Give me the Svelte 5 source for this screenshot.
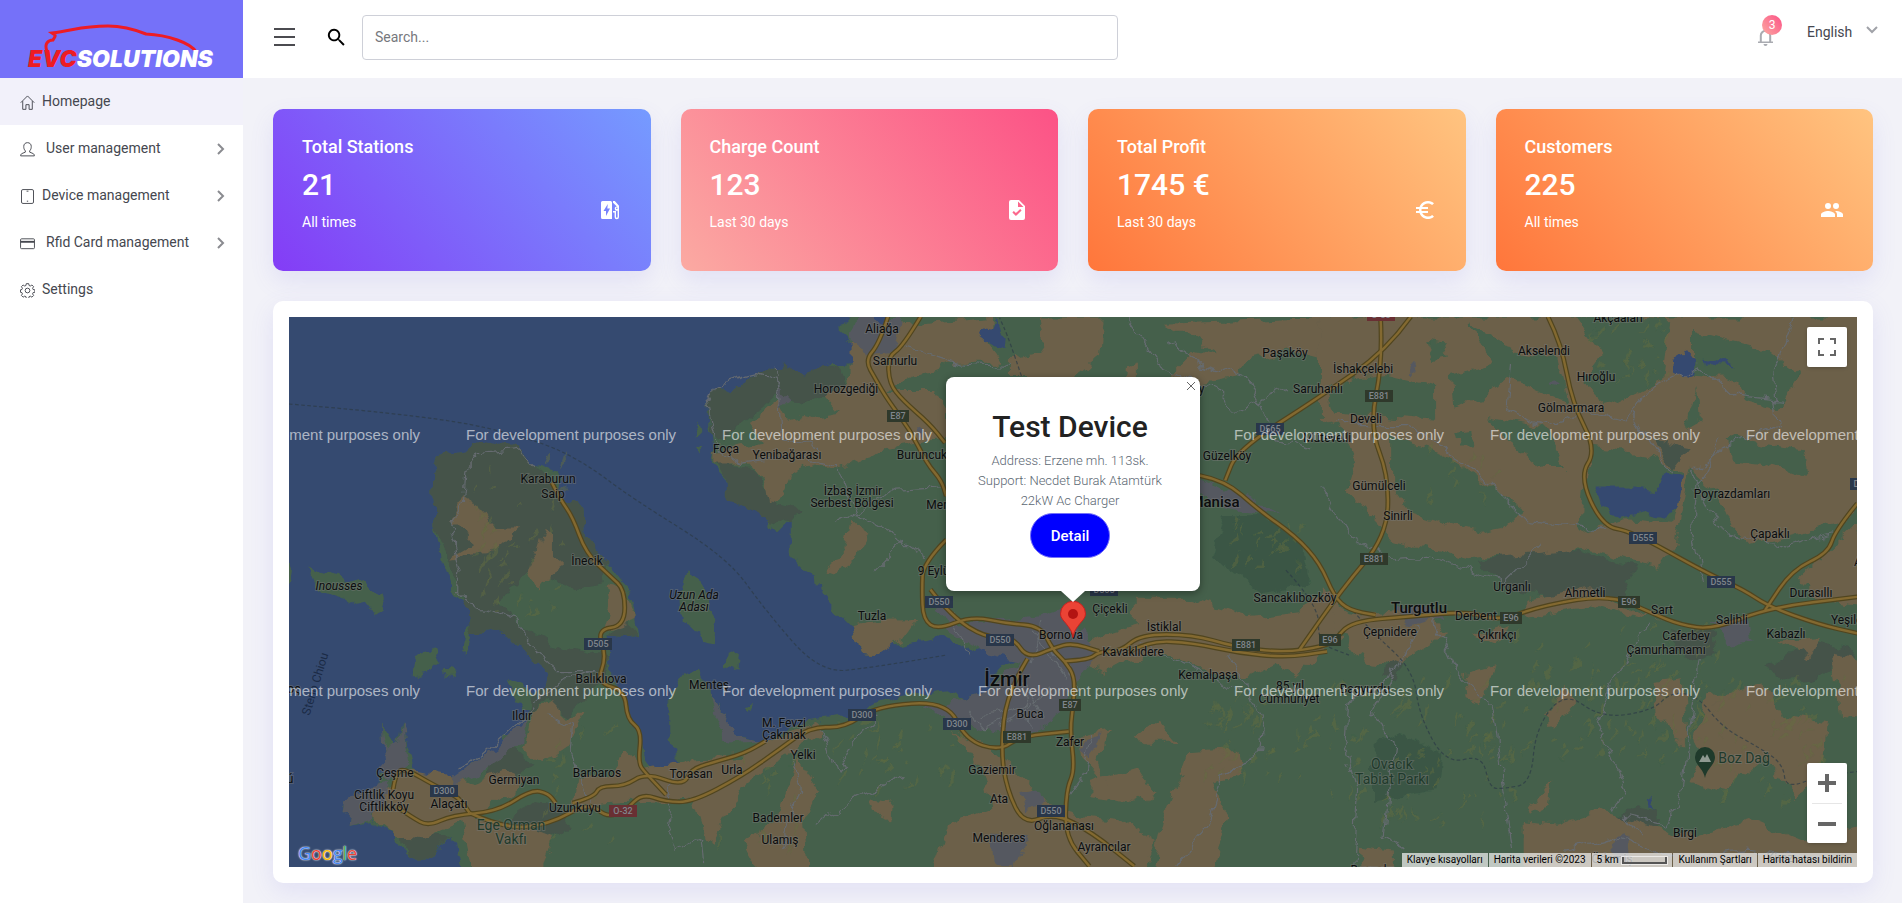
<script lang="ts">
  interface MenuItem {
    icon: string;
    label: string;
    active?: boolean;
    children?: boolean;
    wide?: boolean;
  }

  interface Stat {
    title: string;
    value: string;
    note: string;
    icon: string;
    tone: string;
  }

  const menu: MenuItem[] = [
    { icon: 'home', label: 'Homepage', active: true },
    { icon: 'user', label: 'User management', children: true, wide: true },
    { icon: 'device', label: 'Device management', children: true },
    { icon: 'card', label: 'Rfid Card management', children: true, wide: true },
    { icon: 'gear', label: 'Settings' }
  ];

  const stats: Stat[] = [
    { title: 'Total Stations', value: '21', note: 'All times', icon: 'station', tone: 'violet' },
    { title: 'Charge Count', value: '123', note: 'Last 30 days', icon: 'file', tone: 'pink' },
    { title: 'Total Profit', value: '1745 €', note: 'Last 30 days', icon: 'euro', tone: 'orange' },
    { title: 'Customers', value: '225', note: 'All times', icon: 'people', tone: 'orange' }
  ];

  // terrain, one polygon per entry
  const mainland =
    'M1540 255 705 255 699 262 690 272 705 286 707 299 694 300 684 300 680 320 659 308 640 301 622 310 603 321 590 317 583 332 584 352 588 371 586 382 600 396 600 412 620 415 634 428 644 438 651 431 651 456 665 472 673 475 676 489 689 503 702 516 708 540 724 541 736 532 770 525 787 530 807 538 818 532 835 530 842 541 830 545 818 558 812 569 795 577 781 569 742 574 716 584 699 591 659 596 631 610 605 604 597 591 586 571 577 552 560 560 550 580 550 602 557 626 566 637 554 648 543 640 532 624 527 602 515 577 503 563 503 541 500 523 527 525 523 503 517 483 498 461 482 442 481 420 464 409 458 390 441 384 429 368 410 371 395 362 384 373 361 376 357 390 358 431 364 461 373 486 381 492 390 505 384 522 380 538 385 541 390 522 412 519 432 537 452 555 444 569 435 580 434 593 415 615 390 629 375 643 356 643 339 632 330 596 327 615 315 597 316 618 324 634 313 640 313 651 287 659 285 679 305 676 327 690 336 706 356 706 373 690 381 720 1540 720Z';

  const islands = [
    'M254 467 270 472 286 480 300 476 312 490 318 504 310 510 300 496 288 500 276 492 262 486Z',
    'M342 542 356 536 361 548 352 556 341 558Z',
    'M366 551 375 553 376 558 368 556Z',
    'M566 470 576 478 582 496 592 512 590 532 580 530 574 518 562 514 561 492Z',
    'M600 536 609 540 608 552 599 548Z',
    'M416 557 432 563 444 580 430 584 422 570Z',
    'M572 350 580 356 576 360Z M574 366 582 368 578 372Z M416 603 424 607 418 612Z M614 582 620 578 617 588Z',
    'M236 458 240 470 238 482 234 480Z'
  ];

  const highland = [
    'M361 376 384 373 395 362 429 368 441 384 464 409 481 420 482 442 498 461 500 480 470 484 440 470 424 486 410 494 424 514 452 530 490 540 503 541 500 556 470 590 452 576 434 593 436 580 452 555 412 519 390 522 381 492 358 431 357 390Z',
    'M583 332 590 317 603 321 622 310 640 301 662 308 690 300 698 318 660 334 640 326 612 350 596 362 586 360Z',
    'M590 380 620 386 640 416 660 420 650 432 634 428 600 412 600 396Z',
    'M418 676 440 660 462 664 470 682 452 690 430 690Z',
    'M330 686 372 690 356 706 336 706Z',
    'M398 645 405 620 425 618 440 630 420 645Z',
    'M500 523 527 525 515 512 503 520Z',
    'M1220 464 1253 452 1290 452 1348 467 1339 490 1300 494 1241 486Z',
    'M1363 362 1394 368 1379 387 1366 380Z',
    'M1302 300 1316 322 1340 340 1362 364 1340 370 1316 340Z',
    'M1152 264 1170 262 1166 284 1155 282Z',
    'M1188 264 1212 262 1208 292 1198 288Z',
    'M1340 264 1306 262 1300 290 1290 270Z',
    'M1100 290 1112 286 1116 310 1100 306Z',
    'M1334 672 1350 664 1364 668 1366 682 1352 688 1338 684Z',
    'M1382 520 1412 522 1416 540 1396 546 1380 538Z',
    'M1140 555 1160 540 1150 562Z',
    'M1456 548 1500 530 1530 536 1528 545 1490 560 1466 562Z'
  ];

  const fields = [
    'M381 409 396 418 404 434 429 434 412 450 401 456 370 459 389 448 381 434 370 434Z',
    'M449 435 455 440 455 459 465 468 447 480 444 486 437 470Z',
    'M515 486 525 511 498 520 503 500 501 483Z',
    'M455 577 468 590 481 590 469 615 447 630 432 618 439 588Z',
    'M324 640 344 635 390 645 415 635 435 643 420 655 390 676 430 680 455 690 446 720 390 720 381 678 350 692 327 690 305 673Z',
    'M515 618 529 634 571 626 614 624 628 610 676 596 676 606 637 629 611 651 588 695 580 690 571 659 515 662 472 665 475 640 500 640Z',
    'M657 624 676 651 662 676 665 720 628 720 614 695 640 676Z',
    'M642 330 650 346 662 343 676 346 676 382 651 390 644 409 634 417 631 398 617 382 588 382 588 372 628 365 617 349Z',
    'M702 283 744 268 818 262 815 283 827 299 781 299 753 310 730 324 770 324 780 340 780 360 727 371 710 382 688 387 659 376 659 346 693 341 679 326 702 310Z',
    'M855 261 909 261 906 294 886 310 830 310 830 297 862 290Z',
    'M960 266 1104 261 1104 297 1068 288 1028 297 1023 310 991 316 966 308 986 288 1005 292Z',
    'M929 302 938 298 938 312 928 312Z',
    'M1088 261 1540 261 1540 409 1522 431 1443 450 1425 431 1415 406 1394 387 1382 448 1369 467 1302 453 1210 461 1149 445 1130 425 1111 404 1118 380 1111 360 1088 343Z',
    'M702 516 720 512 756 511 744 527 724 541 708 540Z',
    'M700 430 716 440 704 464 688 474 682 472 696 452Z',
    'M937 492 977 492 1028 508 1071 503 1104 486 1104 527 1068 558 1050 548 1028 558 986 552 960 538 930 545 912 555 870 540 906 525 937 516Z',
    'M787 604 818 618 852 648 864 665 892 673 925 676 954 695 943 720 767 720 781 679 818 665 813 640Z',
    'M898 643 935 632 952 654 935 662 898 657Z',
    'M889 607 915 602 906 629 914 648 892 624Z',
    'M980 621 1020 618 1023 640 1000 645 1011 673 1000 720 949 720 960 673 972 643Z',
    'M955 593 972 613 943 613 938 606Z',
    'M719 658 735 662 733 674 722 670Z',
    'M1088 486 1112 503 1180 508 1192 522 1149 549 1125 547 1100 514Z',
    'M1207 555 1232 549 1226 570 1220 582 1209 578Z',
    'M1215 524 1245 515 1232 532Z',
    'M1259 494 1310 484 1345 503 1370 511 1310 500 1259 508Z',
    'M1272 591 1290 566 1299 580 1281 599Z',
    'M1363 563 1388 560 1391 607 1385 615 1366 591Z',
    'M1409 574 1455 566 1470 590 1507 596 1504 624 1480 657 1455 624 1418 654 1391 646 1403 624 1396 610Z',
    'M1467 528 1501 525 1492 544Z',
    'M1510 539 1540 544 1540 593 1516 591Z',
    'M1256 676 1284 679 1317 668 1363 681 1394 690 1440 676 1486 695 1540 679 1540 720 1256 720Z',
    'M1260 670 1278 643 1276 664Z',
    'M1119 698 1149 701 1149 720 1122 720Z',
    'M1482 476 1531 430 1540 500 1500 495Z'
  ];

  const woods = [
    'M1143 310 1183 319 1183 346 1143 343 1100 340 1094 320 1120 312Z',
    'M1146 360 1195 376 1256 420 1240 436 1220 440 1164 423 1146 398Z',
    'M1210 266 1250 290 1284 297 1293 332 1262 320 1241 310 1220 330 1198 335 1196 310 1230 300Z',
    'M1299 261 1376 264 1370 313 1327 335 1302 316 1321 291Z',
    'M1314 368 1363 376 1388 393 1379 431 1340 428 1302 440 1306 393Z',
    'M1226 343 1272 352 1290 385 1272 385 1235 357Z',
    'M1394 272 1455 288 1483 310 1467 338 1437 330 1425 310 1394 308Z',
    'M1425 360 1486 371 1489 393 1455 382 1428 379Z',
    'M1198 358 1212 356 1214 368 1200 368Z',
    'M1174 282 1192 284 1196 294 1180 296Z',
    'M1400 320 1402 344 1388 352 1396 330Z'
  ];

  const towns = [
    'M767 490 793 514 858 508 880 500 895 527 903 538 886 563 867 596 841 607 787 593 759 582 795 577 812 569 842 544 812 538 784 522Z',
    'M705 263 744 261 738 290 716 292 700 280Z',
    'M315 597 318 618 328 612 331 596 336 632 324 640 287 659 285 679 305 674 318 655Z',
    'M375 640 415 612 434 592 432 612 398 636 370 648Z',
    'M586 571 597 591 608 605 631 610 600 612 590 590Z',
    'M989 395 1030 412 1054 424 1010 418 990 410Z',
    'M895 610 908 606 900 626 890 618Z M842 652 858 650 862 664 846 668Z',
    'M818 688 846 690 838 714 820 714Z',
    'M1148 504 1176 498 1190 510 1160 516Z',
    'M1412 512 1440 510 1444 528 1424 532Z',
    'M1328 696 1340 686 1344 712 1330 712Z',
    'M1276 316 1282 310 1286 318Z M1164 300 1168 304 1162 308Z',
    'M642 322 650 330 642 338Z M756 352 764 354 758 362Z'
  ];

  const lakes = [
    'M1316 401 1342 401 1363 404 1373 390 1388 394 1383 417 1374 428 1357 423 1336 427 1321 417Z',
    'M1379 299 1384 292 1389 290 1396 299 1395 306 1388 309 1380 306Z',
    'M1405 295 1414 296 1430 302 1414 301Z',
    'M724 255 734 255 732 267 722 264Z',
    'M808 276 818 268 822 262 824 275 829 280 828 288 816 282Z',
    'M1358 658 1364 656 1360 664 1362 668 1357 664Z'
  ];

  const highways = [
    '732 261 725 283 713 297 722 313 732 330 750 354 764 382 776 396 780 409',
    '780 445 761 464 760 486 761 511 773 519 801 508 830 514 858 516 868 536 878 545 886 558 885 580 882 602 886 635 879 651 878 690 898 714',
    '759 261 744 286 732 294 733 316 744 330 766 349 779 365',
    '767 486 784 508 813 526 835 525 847 543 869 534 884 530 906 537',
    '878 545 898 544 906 537 924 537 940 523 983 523 1017 533 1057 538 1091 533 1100 528 1114 512 1165 508 1210 504 1235 512 1272 499 1327 490 1363 506 1385 515 1412 519 1458 501 1531 492',
    '930 538 946 528 984 530 1020 538 1060 542 1094 537',
    '1138 261 1140 297 1129 352 1145 393 1143 442 1106 486 1071 536',
    '1163 261 1143 289 1088 327 1020 371 1010 396',
    '989 392 1010 396 1037 420 1068 442 1088 464 1100 492 1112 503 1134 507',
    '1276 261 1287 283 1296 332 1316 371 1302 393 1321 434 1345 438 1406 472 1437 486 1458 500 1500 515 1531 522',
    '1531 415 1513 437 1507 456 1477 470 1455 503',
    '324 651 326 638 333 633 359 648 378 657 387 670',
    '327 665 340 674 353 681 373 672 410 669 438 651 452 654 458 662',
    '387 670 415 683 452 680 486 661 500 674 516 668 529 654 549 661 571 661 611 640 642 618 668 599 696 600 722 582 781 578 796 610 824 619 841 607 881 603',
    '472 662 490 657 494 648 515 648 532 637 563 648 570 634 586 629 614 621 631 611',
    '455 398 462 412 472 426 483 456 503 475 515 486 515 516 492 519 500 541 492 563 515 569 517 593 529 602 526 629 532 637 549 655',
    '847 543 830 571 825 618 830 651 844 680 869 670 900 686 935 714'
  ];

  const lanes = [
    'M642 330 640 312 625 308 590 317 583 332 590 368 610 382 650 376',
    'M441 384 429 370 395 374 384 390 382 414 370 434 380 470 378 486 395 502 425 512 440 536 460 552 492 552',
    'M492 552 466 558 440 580 434 590 398 622 378 634',
    'M452 590 472 596 470 620 486 660',
    'M659 376 690 384 706 424 744 446 764 460',
    'M690 430 740 404 778 402 M720 470 744 446',
    'M745 285 790 300 830 302 M930 262 955 300 1000 320 1020 340 1062 320',
    'M962 280 990 300 1030 312 1050 360 1080 370',
    'M1088 400 1110 440 1150 462 1180 460 1240 480 1270 450',
    'M1100 350 1160 350 1220 390 1260 430 1320 436',
    'M1246 300 1242 340 1270 350 1310 340 1340 346 1360 320 1400 300 1430 326 1470 330',
    'M1480 262 1462 310 1466 350 1420 370 1395 390',
    'M1395 390 1420 440 1470 450 1510 440 M1345 340 1378 390',
    'M1405 480 1395 440 1398 400 1420 360',
    'M1168 516 1152 552 1110 580 1108 610 1120 650 1116 714',
    'M1150 552 1130 590 1150 610 1140 690 1158 700',
    'M1182 512 1200 552 1230 580 1238 640 1246 700',
    'M1360 515 1330 560 1318 600 1340 650 1330 670',
    'M1400 545 1392 600 1386 650 1374 680 1340 672 1352 690',
    'M1012 540 1030 570 1042 600 1040 620 1008 640 996 680 970 714',
    'M938 530 1000 560 1020 570 M878 660 892 640 900 605',
    'M724 590 706 610 690 640 M744 640 700 660 676 680',
    'M781 500 800 540 M840 560 860 590 M850 520 880 560 M810 590 850 580 M826 600 866 570',
    'M838 548 850 600 M858 512 850 545 M868 536 890 568 M800 586 812 600 840 590',
    'M650 618 660 650 644 700 M676 600 690 640',
    'M556 640 550 680 556 700 578 690 580 714',
    'M1290 700 1330 690 1380 708 1440 700 1500 708',
    'M640 300 642 330 644 360 676 370'
  ];

  const borders = [
    '238 333 360 343 440 362 480 380 520 410 600 460 630 502 676 555 720 550 780 540',
    '1112 500 1130 520 1165 552 1170 590 1192 630 1222 622 1228 650 1240 650 1262 646 1266 600 1290 570 1320 592 1362 586 1378 570 1400 574 1420 600 1450 616 1470 630 1472 650 1500 640 1531 636',
    '842 310 832 280 824 262',
    '1060 470 1088 500 1086 530 1112 540'
  ];

  // small ridges scattered over the mountain areas: x, y, width, height, count
  const ranges = [
    [1095, 565, 150, 120, 70],
    [1245, 520, 170, 110, 90],
    [1395, 560, 125, 110, 50],
    [985, 580, 100, 70, 40],
    [690, 595, 100, 60, 28],
    [1010, 430, 60, 50, 22],
    [385, 385, 80, 130, 40],
    [445, 600, 60, 100, 16],
    [1310, 264, 70, 60, 22],
    [1170, 375, 60, 50, 10],
    [590, 630, 70, 80, 14]
  ];

  function scatter(areas: number[][]): string[] {
    let seed = 11;
    const next = () => (seed = (seed * 16807) % 2147483647) / 2147483647;
    const out: string[] = [];
    for (const [x, y, w, h, count] of areas) {
      for (let i = 0; i < count; i++) {
        const px = x + next() * w;
        const py = y + next() * h;
        const len = 4 + next() * 10;
        const lean = next() * 6 - 1;
        out.push(`M${px.toFixed(1)} ${py.toFixed(1)}l${(lean + 2).toFixed(1)} ${(-len).toFixed(1)} 1.5 ${(len / 2).toFixed(1)}z`);
      }
    }
    return out;
  }

  // rounds the corners of a polyline given as "x y x y ..."
  function smooth(line: string): string {
    const n = line.split(' ').map(Number);
    let d = `M${n[0]} ${n[1]}`;
    for (let i = 2; i < n.length - 2; i += 2) {
      d += `Q${n[i]} ${n[i + 1]} ${(n[i] + n[i + 2]) / 2} ${(n[i + 1] + n[i + 3]) / 2}`;
    }
    return `${d}L${n[n.length - 2]} ${n[n.length - 1]}`;
  }

  const ridges = scatter(ranges);
  const roads = highways.map(smooth);
  const limits = borders.map(smooth);

  type Place = [number, number, string];

  const places: Place[] = [
    [259, 166, 'Karaburun'], [264, 181, 'Saip'], [298, 248, 'İnecik'], [437, 136, 'Foça'],
    [498, 142, 'Yenibağarası'], [312, 366, 'Balıklıova'], [420, 372, 'Menteş'],
    [495, 410, 'M. Fevzi'], [495, 422, 'Çakmak'], [514, 442, 'Yelki'], [233, 403, 'Ildır'],
    [106, 460, 'Çeşme'], [95, 482, 'Ciftlik Koyu'], [95, 494, 'Ciftlikköy'], [160, 491, 'Alaçatı'],
    [225, 467, 'Germiyan'], [308, 460, 'Barbaros'], [402, 461, 'Torasan'], [443, 457, 'Urla'],
    [286, 495, 'Uzunkuyu'], [489, 505, 'Bademler'], [491, 527, 'Ulamış'], [1, 466, 'ú'],
    [5, 376, 'ος'], [593, 16, 'Aliağa'], [606, 48, 'Samurlu'], [557, 76, 'Horozgediği'],
    [633, 142, 'Buruncuk'], [564, 178, 'İzbaş İzmir'], [563, 190, 'Serbest Bölgesi'],
    [664, 192, 'Menemen'], [646, 258, '9 Eylül'], [894, 76, 'Karaköy'], [938, 143, 'Güzelköy'],
    [996, 40, 'Paşaköy'], [1029, 76, 'Saruhanlı'], [1038, 125, 'Mütevelli'], [583, 303, 'Tuzla'],
    [821, 296, 'Çiçekli'], [772, 322, 'Bornova'], [875, 314, 'İstiklal'], [844, 339, 'Kavaklıdere'],
    [1006, 285, 'Sancaklıbozköy'], [919, 362, 'Kemalpaşa'], [1001, 373, '85.yıl'],
    [1000, 386, 'Cumhuriyet'], [741, 401, 'Buca'], [781, 429, 'Zafer'], [703, 457, 'Gaziemir'],
    [710, 486, 'Ata'], [775, 513, 'Oğlananası'], [710, 525, 'Menderes'], [815, 534, 'Ayrancılar'],
    [1329, 5, 'Akçaalan'], [1255, 38, 'Akselendi'], [1307, 64, 'Hıroğlu'], [1074, 56, 'İshakçelebi'],
    [1077, 106, 'Develi'], [1282, 95, 'Gölmarmara'], [1090, 173, 'Gümülceli'], [1109, 203, 'Sinirli'],
    [1443, 181, 'Poyrazdamları'], [1481, 221, 'Çapaklı'], [1223, 274, 'Urganlı'],
    [1296, 280, 'Ahmetli'], [1522, 280, 'Durasıllı'], [1373, 297, 'Sart'], [1187, 303, 'Derbent'],
    [1443, 307, 'Salihli'], [1564, 307, 'Yeşilova'], [1101, 319, 'Çepnidere'],
    [1208, 322, 'Çıkrıkçı'], [1397, 323, 'Caferbey'], [1377, 337, 'Çamurhamamı'],
    [1497, 321, 'Kabazlı'], [1076, 376, 'Bagyurdu'], [1396, 520, 'Birgi'], [1323, 546, 'Ödemiş'],
    [1491, 545, 'Kiraz'], [1083, 557, 'Bayındır'], [1582, 249, 'Alaşar']
  ];

  const parks: Place[] = [
    [222, 513, 'Ege Orman'], [222, 527, 'Vakfı'], [1103, 452, 'Ovacık'],
    [1103, 467, 'Tabiat Parkı'], [1455, 446, 'Boz Dağ']
  ];

  const isles: Place[] = [
    [50, 273, 'Inousses'], [405, 282, 'Uzun Ada'], [405, 294, 'Adası']
  ];

  const cities: Place[] = [[926, 190, 'Manisa'], [1130, 296, 'Turgutlu']];

  const shields: Place[] = [
    [309, 327, 'D505'], [155, 474, 'D300'], [334, 494, 'O-32'], [609, 99, 'E87'], [981, 112, 'D565'],
    [650, 285, 'D550'], [711, 323, 'D550'], [815, 273, 'D565'], [957, 328, 'E881'], [1041, 323, 'E96'],
    [781, 388, 'E87'], [573, 398, 'D300'], [668, 407, 'D300'], [728, 420, 'E881'], [762, 494, 'D550'],
    [1092, -2, 'O-33'], [1090, 79, 'E881'], [1085, 242, 'E881'], [1354, 221, 'D555'],
    [1432, 265, 'D555'], [1575, 167, 'D585'], [1340, 285, 'E96'], [1222, 301, 'E96']
  ];

  const notices = [123, 379].flatMap((y) => [-79, 177, 433, 689, 945, 1201, 1457].map((x) => ({ x, y })));

  let search = $state('');
  let language = $state('English');
  let popupOpen = $state(true);
</script>

{#snippet icon(name: string)}
  {#if name === 'home'}
    <svg class="line-icon" viewBox="0 0 16 16"><path d="M.8 8.2 8 1l7.2 7.2M2.9 6.5v8.8h3.4v-5h3.4v5h3.4V6.5" /></svg>
  {:else if name === 'user'}
    <svg class="line-icon" viewBox="0 0 16 16"><path d="M5.7 9.5C4.3 8 4 6.5 4 4.7 4 2.3 5.6.7 8 .7s4 1.600 4 4c0 1.800-.3 3.300-1.700 4.800v1.300l3.600 1.500c1 .5 1.400 1.200 1.400 2.500H.7c0-1.300.4-2 1.400-2.500l3.600-1.500z" /></svg>
  {:else if name === 'device'}
    <svg class="line-icon" viewBox="0 0 16 16"><rect x="1.6" y=".6" width="12.8" height="14.8" rx="1.5" /><path d="M7.300 13h1.400M7 2.300h2" /></svg>
  {:else if name === 'card'}
    <svg class="line-icon" viewBox="0 0 16 16"><rect x=".6" y="3" width="14.8" height="10.5" rx="1" /><path stroke-width="2" d="M.6 6.200h14.800" /></svg>
  {:else if name === 'gear'}
    <svg class="line-icon" viewBox="0 0 16 16">
      <circle cx="8" cy="8" r="2.5" />
      <path d="M6.700.7h2.600l.4 2 1.300.5 1.700-1.100 1.800 1.800-1.100 1.700.5 1.300 2 .4v2.600l-2 .4-.5 1.300 1.100 1.700-1.800 1.800-1.700-1.100-1.300.5-.4 2H6.700l-.4-2-1.300-.5-1.700 1.100-1.800-1.800 1.100-1.700-.5-1.300-1.600-.4V7.300l1.600-.4.5-1.300-1.100-1.700 1.800-1.800L5 3.200l1.300-.5z" />
    </svg>
  {:else if name === 'station'}
    <svg class="solid-icon" viewBox="0 0 24 24"><path fill-rule="evenodd" d="M4.500 3h8A1.500 1.500 0 0 1 14 4.500V21H4.500A1.500 1.500 0 0 1 3 19.500v-15A1.500 1.500 0 0 1 4.500 3zM9.800 6 5.500 13H8v5l4-7.500H9.300zM15 3h1.800l4.200 4.700V19a2.200 2.200 0 0 1-4.400 0v-4.500H15V13h3v6a.8.8 0 0 0 1.600 0v-6.300a2.200 2.200 0 1 1-.7-4.300L15 4.800zm3.800 6.500a.8.8 0 1 0 0 1.600.8.8 0 0 0 0-1.600z" /></svg>
  {:else if name === 'file'}
    <svg class="solid-icon" viewBox="0 0 24 24"><path fill-rule="evenodd" d="M14 2H6a2 2 0 0 0-2 2v16a2 2 0 0 0 2 2h12a2 2 0 0 0 2-2V8zm-3.100 16-3.500-3.500L8.800 13l2.100 2.100L15.200 11l1.400 1.400zM13 9V3.500L18.500 9z" /></svg>
  {:else if name === 'euro'}
    <svg class="solid-icon" viewBox="0 0 24 24"><path d="M15 18.500c-2.500 0-4.700-1.400-5.800-3.500H15v-2H8.600a6.600 6.600 0 0 1 0-2H15V9H9.200A6.500 6.500 0 0 1 15 5.500c1.600 0 3.100.6 4.200 1.600L21 5.300A9 9 0 0 0 6.500 9H3v2h3.100a9 9 0 0 0 0 2H3v2h3.500A9 9 0 0 0 21 18.700l-1.800-1.800a6.500 6.500 0 0 1-4.200 1.600z" /></svg>
  {:else if name === 'people'}
    <svg class="solid-icon" viewBox="0 0 24 24"><path d="M16 11a3 3 0 1 0 0-6 3 3 0 0 0 0 6zm-8 0a3 3 0 1 0 0-6 3 3 0 0 0 0 6zm0 2c-2.300 0-7 1.200-7 3.500V19h14v-2.500C15 14.200 10.300 13 8 13zm8 0h-1c1.200.8 2 2 2 3.500V19h6v-2.500c0-2.300-4.700-3.500-7-3.500z" /></svg>
  {/if}
{/snippet}

<div class="layout">
  <aside class="sidebar">
    <a class="brand" href="#home" aria-label="EVC Solutions">
      <svg class="brand__logo" viewBox="0 0 243 78" width="243" height="78" aria-hidden="true">
        <path
          class="brand__car"
          d="M47 51C44 44 48 40 53 40c1-2 3-4 2-5l-3-2C75 30 82 26 108 26c17 0 28 4 38 8 22 1 45 9 50 18"
        />
        <text x="28" y="67"><tspan class="brand__evc">EVC</tspan>SOLUTIONS</text>
      </svg>
    </a>
    <nav class="menu" aria-label="Main">
      {#each menu as item}
        <a class="menu__item" class:menu__item--active={item.active} class:menu__item--wide={item.wide} href="#{item.icon}">
          {@render icon(item.icon)}
          <span class="menu__label">{item.label}</span>
          {#if item.children}
            <svg class="menu__arrow" viewBox="0 0 8 12" aria-hidden="true"><path d="M1 1l5 5-5 5" /></svg>
          {/if}
        </a>
      {/each}
    </nav>
  </aside>

  <div class="page">
    <header class="topbar">
      <button class="topbar__toggle" type="button" aria-label="Toggle menu"><span></span><span></span><span></span></button>
      <label class="topbar__glass" for="search" aria-label="Search">
        <svg viewBox="0 0 24 24" aria-hidden="true"><path d="M15.500 14h-.8l-.3-.3A6.500 6.500 0 1 0 13.700 14.400l.3.3v.8l5 5 1.500-1.500zm-6 0a4.500 4.500 0 1 1 0-9 4.500 4.500 0 0 1 0 9z" /></svg>
      </label>
      <input id="search" class="topbar__search" type="text" placeholder="Search..." bind:value={search} />
      <div class="topbar__right">
        <button class="bell" type="button" aria-label="Notifications">
          <svg viewBox="0 0 15 17" aria-hidden="true"><path class="bell__body" d="M2.800 13V6.500a4.700 4.700 0 0 1 9.400 0V13" /><path d="M0 12.600h15V14H0zM5.500 15h4a2 2 0 0 1-4 0z" /></svg>
          <span class="bell__count">3</span>
        </button>
        <div class="language">
          <select aria-label="Language" bind:value={language}>
            <option>English</option>
          </select>
          <svg viewBox="0 0 12 8" aria-hidden="true"><path d="M1 1l5 5 5-5" /></svg>
        </div>
      </div>
    </header>

    <main class="content">
      <section class="stats">
        {#each stats as stat}
          <article class="stat stat--{stat.tone}">
            <div>
              <h4 class="stat__title">{stat.title}</h4>
              <p class="stat__value">{stat.value}</p>
              <p class="stat__note">{stat.note}</p>
            </div>
            {@render icon(stat.icon)}
          </article>
        {/each}
      </section>

      <section class="panel">
        <div class="map">
          <svg class="map__canvas" viewBox="0 0 1568 550" preserveAspectRatio="xMidYMid slice" role="img" aria-label="Map of İzmir">
            <defs>
              <filter id="rough" x="0" y="0" width="100%" height="100%">
                <feTurbulence type="fractalNoise" baseFrequency="0.07" numOctaves="3" seed="4" />
                <feDisplacementMap in="SourceGraphic" scale="13" xChannelSelector="R" yChannelSelector="G" />
              </filter>
            </defs>
            <rect class="sea" width="1568" height="550" />
            <g transform="translate(-289 -317) scale(1.2131)">
              <g filter="url(#rough)">
                <path class="forest" d={mainland} />
                {#each islands as d}<path class="forest" {d} />{/each}
                {#each highland as d}<path class="highland" {d} />{/each}
                {#each fields as d}<path class="field" {d} />{/each}
                {#each woods as d}<path class="forest" {d} />{/each}
                <path class="park" d="M1131 621 1146 603 1189 621 1186 651 1131 662Z" />
                <path class="park" d="M1010 424 1040 424 1072 446 1080 480 1040 490 1000 460Z" />
                <path class="highland" d="M1363 362 1394 368 1379 387Z" />
                {#each ridges as d}<path class="ridge" {d} />{/each}
                {#each towns as d}<path class="town" {d} />{/each}
                {#each lakes as d}<path class="sea" {d} />{/each}
                {#each lanes as d}<path class="lane" {d} />{/each}
              </g>
              {#each limits as d}<path class="border" {d} />{/each}
              {#each roads as d}<path class="road-case" {d} />{/each}
              {#each roads as d}<path class="road" {d} />{/each}
            </g>
            {#each shields as [x, y, name]}
              <rect
                class={name.startsWith('D') ? 'shield' : name.startsWith('E') ? 'shield shield--euro' : 'shield shield--toll'}
                x={x - (name.length > 3 ? 14 : 11)}
                y={y - 6}
                width={name.length > 3 ? 28 : 22}
                height="12"
              />
              <text class="shield-text" {x} y={y + 3}>{name}</text>
            {/each}
            {#each places as [x, y, name]}<text class="place" {x} {y}>{name}</text>{/each}
            {#each isles as [x, y, name]}<text class="place place--isle" {x} {y}>{name}</text>{/each}
            {#each parks as [x, y, name]}<text class="place place--park" {x} {y}>{name}</text>{/each}
            {#each cities as [x, y, name]}<text class="place place--city" {x} {y}>{name}</text>{/each}
            <text class="place place--metro" x="718" y="369">İzmir</text>
            <text class="strait" transform="translate(30 368) rotate(-73)">Steno Chiou</text>
            <g transform="translate(1416 443)">
              <path class="peak" d="M0 18C-2 8-10 5-10-3a10 10 0 0 1 20 0c0 8-8 11-10 21z" />
              <path class="peak-mark" d="M-6 2l4-7 2 3 2-4 4 8z" />
            </g>
            {#each notices as { x, y }}<text class="notice" {x} {y}>For development purposes only</text>{/each}
          </svg>

          <svg class="marker" viewBox="0 0 26 37" aria-hidden="true">
            <path fill="#ea4335" stroke="#c5221f" d="M13 36.500c-1-7-4-10-7-14C3.500 19.300.5 17 .5 12.800a12.500 12.500 0 0 1 25 0c0 4.200-3 6.500-5.500 9.700-3 4-6 7-7 14z" />
            <circle cx="13" cy="13" r="5" fill="#b31412" />
          </svg>

          {#if popupOpen}
            <div class="popup">
              <button class="popup__close" type="button" aria-label="Close" onclick={() => (popupOpen = false)}>
                <svg viewBox="0 0 10 10" aria-hidden="true"><path d="M1 1l8 8M9 1l-8 8" /></svg>
              </button>
              <h1 class="popup__title">Test Device</h1>
              <p>Address: Erzene mh. 113sk.</p>
              <p>Support: Necdet Burak Atamtürk</p>
              <p>22kW Ac Charger</p>
              <button class="popup__detail" type="button">Detail</button>
            </div>
          {/if}

          <button class="map__full" type="button" aria-label="Fullscreen">
            <svg viewBox="0 0 18 18" aria-hidden="true"><path d="M1 6V1h5M12 1h5v5M17 12v5h-5M6 17H1v-5" /></svg>
          </button>

          <div class="map__zoom">
            <button type="button" aria-label="Zoom in"><svg viewBox="0 0 18 18" aria-hidden="true"><path d="M0 9h18M9 0v18" /></svg></button>
            <button type="button" aria-label="Zoom out"><svg viewBox="0 0 18 18" aria-hidden="true"><path d="M0 9h18" /></svg></button>
          </div>

          <a class="map__google" href="#google" aria-label="Google">
            <span class="g-blue">G</span><span class="g-red">o</span><span class="g-yellow">o</span><span class="g-blue">g</span><span class="g-green">l</span><span class="g-red">e</span>
          </a>

          <div class="map__legal">
            <button type="button">Klavye kısayolları</button>
            <span>Harita verileri ©2023</span>
            <span class="scale">5 km <i></i></span>
            <a href="#terms">Kullanım Şartları</a>
            <a href="#report">Harita hatası bildirin</a>
          </div>
        </div>
      </section>
    </main>
  </div>
</div>

<style>
  :global(body) {
    background: #f2f2f8;
  }

  .layout {
    display: flex;
    min-height: 100vh;
    font-family: Roboto, sans-serif;
    font-size: 14px;
    color: #45474f;
  }

  button,
  input,
  select {
    font-family: inherit;
  }

  button {
    border: 0;
    padding: 0;
    cursor: pointer;
  }

  a {
    color: inherit;
    text-decoration: none;
  }

  h1,
  h4,
  p {
    margin: 0;
  }

  /* sidebar */
  .sidebar {
    flex: 0 0 243px;
    background: #fff;
  }

  .brand {
    display: block;
    height: 78px;
    background: #7571f9;
  }

  .brand__logo {
    display: block;
    font: italic 900 23px Inter, sans-serif;
    fill: #fff;
  }

  .brand__evc {
    fill: #ed1c24;
  }

  .brand__car {
    fill: none;
    stroke: #ed1c24;
    stroke-width: 3;
  }

  .menu__item {
    display: flex;
    align-items: center;
    gap: 7px;
    height: 47px;
    padding: 0 18px 0 20px;
    box-sizing: border-box;
  }

  .menu__item--wide {
    gap: 11px;
  }

  .menu__item--active {
    background: #f2f1fa;
  }

  .menu__label {
    flex: 1;
    padding-bottom: 2px;
  }

  .line-icon {
    width: 15px;
    height: 15px;
    margin-top: 2px;
    fill: none;
    stroke: #45474f;
  }

  .menu__arrow {
    width: 8px;
    height: 12px;
    fill: none;
    stroke: #8a8b90;
    stroke-width: 2;
  }

  /* top bar */
  .page {
    flex: 1;
    min-width: 0;
  }

  .topbar {
    display: flex;
    align-items: center;
    height: 78px;
    box-sizing: border-box;
    padding: 0 24px 4px 31px;
    background: #fff;
  }

  .topbar__toggle {
    display: flex;
    flex-direction: column;
    gap: 6px;
    width: 21px;
    background: none;
  }

  .topbar__toggle span {
    height: 2px;
    background: #4b4b50;
  }

  .topbar__glass {
    display: flex;
    margin: 0 14px 0 30px;
  }

  .topbar__glass svg {
    width: 23px;
    height: 23px;
  }

  .topbar__search {
    flex: 0 1 756px;
    height: 45px;
    box-sizing: border-box;
    padding: 0 12px;
    border: 1px solid #ced0d8;
    border-radius: 4px;
    font-size: 14px;
    color: #495057;
    outline: 0;
  }

  .topbar__search::placeholder {
    color: #76787d;
  }

  .topbar__right {
    display: flex;
    align-items: center;
    gap: 34px;
    margin-left: auto;
    padding-bottom: 10px;
  }

  .bell {
    position: relative;
    width: 15px;
    height: 17px;
    margin-top: 10px;
    background: none;
  }

  .bell svg {
    display: block;
    fill: #a9abb1;
  }

  .bell .bell__body {
    fill: none;
    stroke: #a9abb1;
    stroke-width: 2;
  }

  .bell__count {
    position: absolute;
    left: 4px;
    top: -14px;
    width: 20px;
    border-radius: 10px;
    background: linear-gradient(230deg, #fc5286, #fbaaa2);
    color: #fff;
    font-size: 12px;
    line-height: 20px;
  }

  .language {
    display: flex;
    align-items: center;
    gap: 13px;
  }

  .language select {
    appearance: none;
    border: 0;
    padding: 0;
    background: none;
    font-size: 14px;
    color: #45474f;
  }

  .language svg {
    width: 12px;
    margin-top: -4px;
    fill: none;
    stroke: #a0a2a8;
    stroke-width: 2;
  }

  /* figures */
  .content {
    display: grid;
    gap: 30px;
    padding: 31px 29px 20px 30px;
  }

  .stats {
    display: grid;
    grid-template-columns: repeat(4, 1fr);
    gap: 30px;
  }

  .stat {
    display: flex;
    justify-content: space-between;
    align-items: center;
    height: 162px;
    box-sizing: border-box;
    padding: 0 29px;
    border-radius: 10px;
    color: #fff;
    box-shadow: 0 10px 25px rgba(110, 100, 220, 0.12);
  }

  .stat > div {
    padding-bottom: 12px;
  }

  .stat--violet {
    background: linear-gradient(230deg, #759bff, #843cf6);
  }

  .stat--pink {
    background: linear-gradient(230deg, #fc5286, #fbaaa2);
  }

  .stat--orange {
    background: linear-gradient(230deg, #ffc480, #ff763b);
  }

  .stat__title {
    font-size: 18px;
    font-weight: 500;
    line-height: 26px;
  }

  .stat__value {
    padding: 8px 0;
    font-size: 30px;
    font-weight: 500;
    line-height: 34px;
  }

  .stat__note {
    font-size: 14px;
    line-height: 24px;
  }

  .solid-icon {
    width: 24px;
    height: 24px;
    margin-top: 40px;
    fill: #fff;
  }

  /* map */
  .panel {
    padding: 16px;
    border-radius: 10px;
    background: #fff;
    box-shadow: 0 8px 25px rgba(110, 100, 220, 0.12);
  }

  .map {
    position: relative;
    height: 550px;
    overflow: hidden;
  }

  .map__canvas {
    display: block;
    width: 100%;
    height: 100%;
  }

  .sea {
    fill: #354a70;
  }

  .forest {
    fill: #44604b;
  }

  .highland {
    fill: #44534a;
  }

  .field {
    fill: #6c6049;
  }

  .park {
    fill: #3a5745;
  }

  .town {
    fill: #555960;
  }

  .ridge {
    fill: #626c40;
    fill-opacity: 0.5;
  }

  .lane,
  .border,
  .road-case,
  .road {
    fill: none;
    stroke-linejoin: round;
  }

  .lane {
    stroke: #666b70;
  }

  .border {
    stroke: #2c3b46;
    stroke-opacity: 0.7;
    stroke-dasharray: 3 2;
  }

  .road-case {
    stroke: #50451f;
    stroke-width: 4;
  }

  .road {
    stroke: #836930;
    stroke-width: 2;
  }

  .shield {
    fill: #29374a;
  }

  .shield--euro {
    fill: #2f392b;
  }

  .shield--toll {
    fill: #692f33;
  }

  .shield-text {
    font: 500 9px Roboto, sans-serif;
    fill: #80868c;
    text-anchor: middle;
  }

  .place {
    font: 12px Roboto, sans-serif;
    fill: #0c0d0e;
    stroke: rgba(120, 122, 120, 0.45);
    stroke-width: 2;
    paint-order: stroke;
    text-anchor: middle;
  }

  .place--isle {
    font-style: italic;
  }

  .place--park {
    font-size: 14px;
    fill: #1f3a2b;
  }

  .place--city {
    font-size: 15px;
    font-weight: 500;
  }

  .place--metro {
    font-size: 20px;
    font-weight: 500;
  }

  .strait {
    font: 12px Roboto, sans-serif;
    fill: #1b2b46;
    text-anchor: middle;
  }

  .peak {
    fill: #1f3a2b;
  }

  .peak-mark {
    fill: #8f9a92;
  }

  .notice {
    font: 15px "Liberation Sans", Arial, sans-serif;
    fill: rgba(255, 255, 255, 0.6);
  }

  .marker {
    position: absolute;
    left: 50%;
    top: 284px;
    width: 26px;
    height: 37px;
    margin-left: -13px;
  }

  .popup {
    position: absolute;
    left: 50%;
    top: 60px;
    width: 254px;
    height: 214px;
    margin-left: -127px;
    padding: 32px 6px 0 0;
    box-sizing: border-box;
    border-radius: 8px;
    background: #fff;
    box-shadow: 0 2px 7px 1px rgba(0, 0, 0, 0.3);
    text-align: center;
    font-size: 13px;
    font-weight: 300;
    line-height: 20px;
    color: #5b6772;
  }

  .popup::after {
    content: '';
    position: absolute;
    left: 50%;
    top: 100%;
    margin-left: -12px;
    border: 12px solid transparent;
    border-top: 11px solid #fff;
    border-bottom: 0;
  }

  .popup__close {
    position: absolute;
    right: 4px;
    top: 4px;
    width: 10px;
    height: 10px;
    background: none;
  }

  .popup__close svg {
    display: block;
    stroke: #666;
  }

  .popup__title {
    padding-bottom: 6px;
    font-size: 30px;
    font-weight: 500;
    line-height: 36px;
    color: #222;
  }

  .popup__detail {
    height: 45px;
    padding: 0 20px;
    margin-top: 2px;
    border: 1px solid #7571f9;
    border-radius: 24px;
    background: #00f;
    color: #fff;
    font-size: 15px;
    font-weight: 500;
  }

  .map__full,
  .map__zoom {
    position: absolute;
    right: 10px;
    width: 40px;
    border-radius: 2px;
    background: #fff;
    box-shadow: 0 1px 4px -1px rgba(0, 0, 0, 0.3);
  }

  .map__full {
    top: 10px;
    height: 40px;
  }

  .map__zoom {
    bottom: 24px;
    display: grid;
    padding: 0 5px;
    box-sizing: border-box;
  }

  .map__zoom button {
    height: 40px;
    background: none;
  }

  .map__zoom button + button {
    border-top: 1px solid #e6e6e6;
  }

  .map__full svg,
  .map__zoom svg {
    display: block;
    width: 18px;
    margin: 0 auto;
    fill: none;
    stroke: #666;
    stroke-width: 2;
  }

  .map__zoom svg {
    stroke-width: 4;
  }

  .map__google {
    position: absolute;
    left: 9px;
    bottom: 2px;
    display: flex;
    font: 500 18px/24px "Open Sans", sans-serif;
    text-shadow: 0 0 2px #fff, 0 0 1px #fff;
  }

  .g-blue {
    color: #4285f4;
  }

  .g-red {
    color: #ea4335;
  }

  .g-yellow {
    color: #fbbc04;
  }

  .g-green {
    color: #34a853;
  }

  .map__legal {
    position: absolute;
    right: 0;
    bottom: 0;
    display: flex;
    gap: 1px;
  }

  .map__legal > * {
    padding: 0 5px;
    background: rgba(245, 245, 245, 0.7);
    font-size: 10px;
    line-height: 14px;
    color: #000;
  }

  .scale {
    display: flex;
    align-items: center;
    gap: 4px;
  }

  .scale i {
    width: 41px;
    height: 5px;
    border: solid #555;
    border-width: 0 2px 2px;
    outline: 1px solid rgba(255, 255, 255, 0.6);
  }
</style>
